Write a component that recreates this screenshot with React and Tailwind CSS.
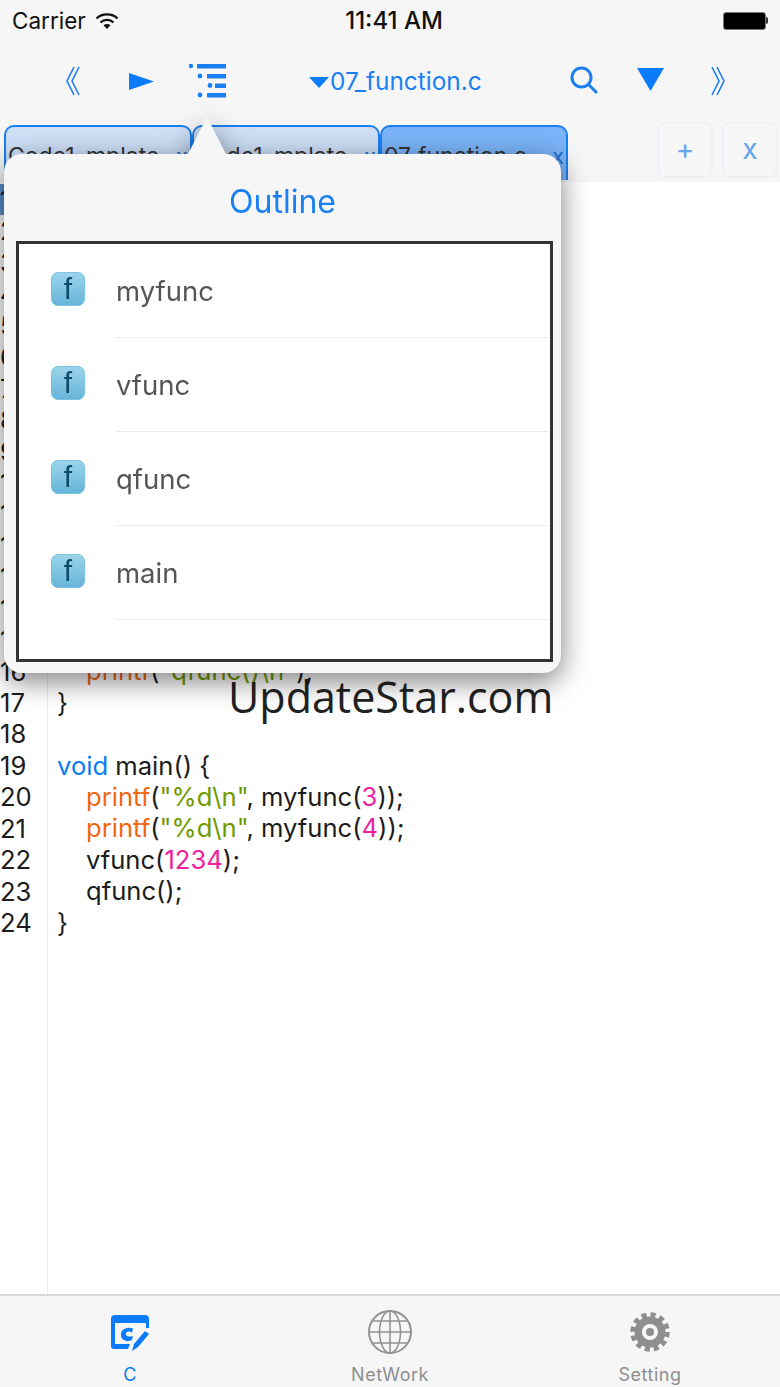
const uiFont = "font-['Inter','Liberation_Sans',sans-serif]";

const K = ({ children }) => <span className="text-[#0a7cf0]">{children}</span>;
const Fn = ({ children }) => <span className="text-[#f2670f]">{children}</span>;
const Str = ({ children }) => <span className="text-[#6f9a00]">{children}</span>;
const Num = ({ children }) => <span className="text-[#f01ea0]">{children}</span>;

// lines 1-15 sit behind the outline popover, only their numbers peek out
const codeLines = [
  ...Array.from({ length: 15 }, () => ({ text: "" })),
  { text: <><Fn>printf</Fn>(<Str>"qfunc()\n"</Str>);</>, indent: true },
  { text: "}" },
  { text: "" },
  { text: <><K>void</K> main() {"{"}</> },
  { text: <><Fn>printf</Fn>(<Str>"%d\n"</Str>, myfunc(<Num>3</Num>));</>, indent: true },
  { text: <><Fn>printf</Fn>(<Str>"%d\n"</Str>, myfunc(<Num>4</Num>));</>, indent: true },
  { text: <>vfunc(<Num>1234</Num>);</>, indent: true },
  { text: <>qfunc();</>, indent: true },
  { text: "}" },
];

const outlineItems = ["myfunc", "vfunc", "qfunc", "main"];

const tabs = [
  { name: "Code1_mplate", active: false },
  { name: "Code1_mplate", active: false },
  { name: "07_function.c", active: true },
];

const DoubleChevron = ({ flip }) => (
  <svg width="16" height="30" viewBox="0 0 16 30" fill="none" stroke="#1a7ff2" strokeWidth="1.6" className={flip ? "-scale-x-100" : ""}>
    <path d="M9 1 L2 15 L9 29" />
    <path d="M14 1 L7 15 L14 29" />
  </svg>
);

const OutlineIcon = () => (
  <svg width="40" height="36" viewBox="0 0 40 36" fill="#1a7ff2">
    <circle cx="3" cy="3" r="2.2" />
    <rect x="9" y="1" width="29" height="4.5" />
    <circle cx="12" cy="13" r="2.4" />
    <rect x="19" y="11" width="19" height="4.5" />
    <circle cx="22" cy="22.5" r="2.4" />
    <rect x="27" y="20.5" width="11" height="4.5" />
    <circle cx="12" cy="32" r="2.4" />
    <rect x="19" y="30" width="19" height="4.5" />
  </svg>
);

const SearchIcon = () => (
  <svg width="28" height="28" viewBox="0 0 28 28" fill="none" stroke="#1a7ff2" strokeWidth="3" strokeLinecap="round">
    <circle cx="11.5" cy="11.5" r="9.5" />
    <path d="M18.5 18.5 L26 26" />
  </svg>
);

const WifiIcon = () => (
  <svg width="24" height="18" viewBox="0 0 24 18" fill="none" stroke="#111" strokeWidth="2.4">
    <path d="M1.5 6.5 C7 1 17 1 22.5 6.5" />
    <path d="M5.5 10.5 C9 7 15 7 18.5 10.5" />
    <path d="M12 17 L8.5 13.3 C10.5 11.7 13.5 11.7 15.5 13.3 Z" fill="#111" stroke="none" />
  </svg>
);

const CodeTabIcon = () => (
  <svg width="40" height="38" viewBox="0 0 40 38">
    <path d="M5 1 H35 Q39 1 39 5 V14 H36 V9 H5 V30 H20 L18 35 H4 Q1 35 1 32 V5 Q1 1 5 1 Z" fill="#0a7cfb" />
    <path d="M23 14.5 C15 12 10 17 11 22 C12 27 18 28 22 26 L23 22 C20 23 16 23 16 20 C16 17 20 17 22 19 Z" fill="#0a7cfb" />
    <path d="M35 17 L39 20 L28 33 L22 37 L24 30 Z" fill="#0a7cfb" />
  </svg>
);

const GlobeIcon = () => (
  <svg width="44" height="44" viewBox="0 0 44 44" fill="none" stroke="#919191" strokeWidth="1.5">
    <circle cx="22" cy="22" r="21" strokeWidth="2" />
    <ellipse cx="22" cy="22" rx="10.5" ry="21" />
    <path d="M22 1 V43 M1 22 H43 M5 11 H39 M5 33 H39" />
  </svg>
);

const GearIcon = () => (
  <svg width="40" height="40" viewBox="0 0 40 40">
    <circle cx="20" cy="20" r="17" fill="none" stroke="#8e8e8e" strokeWidth="5.5" strokeDasharray="5 3.9" />
    <circle cx="20" cy="20" r="15.5" fill="#8e8e8e" />
    <circle cx="20" cy="20" r="8" fill="#f6f6f6" />
    <circle cx="20" cy="20" r="4" fill="#8e8e8e" />
  </svg>
);

const FuncBadge = () => (
  <div className="flex h-[34px] w-[34px] shrink-0 items-center justify-center rounded-[7px] border border-[#7cc2de] bg-gradient-to-b from-[#9ad4ea] to-[#66b5da] font-['Liberation_Sans',sans-serif] text-[30px] leading-none text-[#0f4a66]">
    f
  </div>
);

export default function App() {
  return (
    <div className={`relative flex h-[1387px] w-[780px] flex-col overflow-hidden bg-white ${uiFont}`}>
      {/* status bar */}
      <div className="flex h-[40px] items-center justify-between bg-[#f6f6f6] pl-[12px] pr-[12px] pt-[1px] text-[22.5px] text-[#111]">
        <div className="flex w-[200px] items-center gap-[9px]">
          <span>Carrier</span>
          <WifiIcon />
        </div>
        <span className="ml-[8px] text-[24px] font-medium">11:41 AM</span>
        <div className="flex w-[200px] items-center justify-end">
          <div className="h-[18px] w-[43px] rounded-[3px] border border-[#777] bg-black" />
          <div className="h-[7px] w-[2px] rounded-r-sm bg-[#333]" />
        </div>
      </div>

      {/* toolbar */}
      <div className="flex h-[82px] items-center bg-[#f6f6f6] pl-[65px]">
        <DoubleChevron />
        <svg width="25" height="17" viewBox="0 0 25 17" className="ml-[48px]" fill="#0a7cfb">
          <path d="M0 0 L25 8.5 L0 17 Z" />
        </svg>
        <div className="ml-[34px]">
          <OutlineIcon />
        </div>
        <div className="ml-[81px] flex w-[261px] items-center">
          <svg width="20" height="11" viewBox="0 0 20 11" fill="#0a7cfb" className="mt-[3px]">
            <path d="M0 0 H20 L10 11 Z" />
          </svg>
          <span className="ml-[1px] text-[24.4px] text-[#1a7ff2]">07_function.c</span>
        </div>
        <div className="-mt-[3px]">
          <SearchIcon />
        </div>
        <svg width="27" height="23" viewBox="0 0 27 23" className="ml-[39px] -mt-[4px]" fill="#0a7cfb">
          <path d="M0 0 H27 L13.5 23 Z" />
        </svg>
        <div className="ml-[46px]">
          <DoubleChevron flip />
        </div>
      </div>

      {/* file tabs */}
      <div className="flex h-[60px] items-start bg-[#f6f6f6] pl-[4px]">
        <div className="mt-[3px] flex">
          {tabs.map((t, i) => (
            <div
              key={i}
              className={`flex h-[55px] w-[188px] items-center justify-between rounded-t-[10px] border-2 border-b-0 border-[#1a7ff2] pl-[2px] pr-[2px] pt-[6px] text-[23px] text-[#333] ${
                t.active ? "bg-[#7ab3f8]" : "bg-gradient-to-b from-[#cfe0f6] to-[#c3d9f4]"
              }`}
            >
              <span className="whitespace-nowrap">{t.name}</span>
              <span className="text-[22px] text-[#1a6fd0]">x</span>
            </div>
          ))}
        </div>
        <div className="ml-[89px] flex gap-[9px]">
          <div className="flex h-[56px] w-[56px] items-center justify-center rounded-[8px] border-2 border-[#edf0f4] pb-[2px] text-[28px] text-[#64a5ee]">+</div>
          <div className="flex h-[56px] w-[56px] items-center justify-center rounded-[8px] border-2 border-[#edf0f4] pb-[2px] text-[28px] text-[#64a5ee]">x</div>
        </div>
      </div>

      {/* editor */}
      <div className="flex min-h-0 flex-1 text-[25.6px] leading-[31.43px] text-[#1c1c1c]">
        <div className="w-[48px] shrink-0 border-r border-[#e4edf2] pt-[2px]">
          {codeLines.map((_, i) => (
            <div key={i} className={i === 0 ? "bg-[#5a8fc8]" : ""}>
              {i + 1}
            </div>
          ))}
        </div>
        <div className="pl-[9px] pt-[2px]">
          {codeLines.map((l, i) => (
            <div key={i} className={`h-[31.43px] whitespace-pre ${l.indent ? "pl-[29px]" : ""}`}>
              {l.text}
            </div>
          ))}
        </div>
      </div>

      {/* bottom tab bar */}
      <div className="grid h-[93px] grid-cols-3 border-t-2 border-[#d9d9d9] bg-[#f6f6f6] text-[18px] leading-[24px] tracking-[0.5px]">
        <div className="flex flex-col items-center pt-[16px] text-[#0a7cf0]">
          <div className="flex h-[42px] items-center">
            <CodeTabIcon />
          </div>
          <span className="mt-[9px]">C</span>
        </div>
        <div className="flex flex-col items-center pt-[13px] text-[#8e8e8e]">
          <div className="flex h-[45px] items-center">
            <GlobeIcon />
          </div>
          <span className="mt-[9px]">NetWork</span>
        </div>
        <div className="flex flex-col items-center pt-[13px] text-[#8e8e8e]">
          <div className="flex h-[45px] items-center">
            <GearIcon />
          </div>
          <span className="mt-[9px]">Setting</span>
        </div>
      </div>

      {/* watermark */}
      <div className="absolute left-[228px] top-[667px] font-['Open_Sans',sans-serif] text-[43px] leading-[60px] text-[#222]">
        UpdateStar.com
      </div>

      {/* outline popover */}
      <div className="absolute left-[4px] top-[117px] w-[557px] drop-shadow-[0_8px_14px_rgba(0,0,0,0.5)]">
        <svg width="40" height="37" viewBox="0 0 40 37" className="ml-[183px] block" fill="#f6f6f6">
          <path d="M20 0 L39 37 H1 Z" />
        </svg>
        <div className="rounded-[18px] bg-[#f6f6f6] pb-[11px] pl-[12px] pr-[8px]">
          <div className="flex h-[87px] items-center justify-center pr-[4px] pt-[8px] text-[32px] text-[#1a7ff2]">Outline</div>
          <div className="h-[421px] border-[3px] border-[#333] bg-white">
            {outlineItems.map((name) => (
              <div key={name} className="flex h-[94px] pl-[32px]">
                <div className="flex h-full items-start pt-[28px]">
                  <FuncBadge />
                </div>
                <div className="ml-[31px] mr-[2px] flex flex-1 items-center border-b border-[#eaeaea] pt-[3px] text-[27.5px] text-[#555]">
                  {name}
                </div>
              </div>
            ))}
          </div>
        </div>
      </div>
    </div>
  );
}
